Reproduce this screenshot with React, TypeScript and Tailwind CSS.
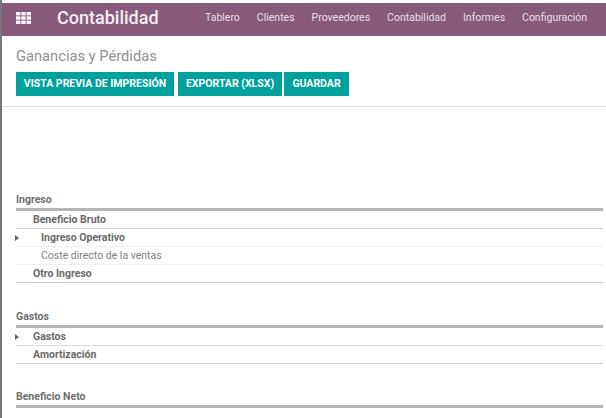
import React from "react";

const nav = ["Tablero", "Clientes", "Proveedores", "Contabilidad", "Informes", "Configuración"];

function Caret() {
  return (
    <svg width="4" height="6" viewBox="0 0 4 6" className="shrink-0">
      <path d="M0 0 L4 3 L0 6 Z" fill="#666" />
    </svg>
  );
}

function Section({ title, className }: { title: string; className: string }) {
  return (
    <div className={`flex items-end h-[21px] pb-[3px] mr-[3px] border-b-[3px] border-[#b5b5b5] text-[10.5px] font-bold leading-none text-[#707070] ${className}`}>
      <span>{title}</span>
    </div>
  );
}

function Row({ label, indent, bold = true, caret, line = "border-[#ddd]" }: { label: string; indent: string; bold?: boolean; caret?: boolean; line?: string }) {
  return (
    <div className={`relative flex items-center h-[18px] pt-[1px] mr-[3px] border-b ${line} text-[10.5px] leading-none ${bold ? "font-bold text-[#6a6a6a]" : "font-normal text-[#808080]"}`}>
      {caret && (
        <span className="absolute -left-[1px] top-[6px]">
          <Caret />
        </span>
      )}
      <span className={indent}>{label}</span>
    </div>
  );
}

export default function App() {
  return (
    <div className="w-[606px] h-[418px] overflow-hidden bg-white pt-[3px] border-l-2 border-[#777]" style={{ fontFamily: "Roboto, 'Liberation Sans', sans-serif" }}>
      <header className="h-[33px] pb-[4px] bg-[#875a7b] flex items-center text-white">
        <svg width="15" height="12" viewBox="0 0 15 12" className="ml-[14px] shrink-0" fill="#fbf4f8">
          <rect x="0" y="0" width="4.4" height="3.4" />
          <rect x="5.3" y="0" width="4.4" height="3.4" />
          <rect x="10.6" y="0" width="4.4" height="3.4" />
          <rect x="0" y="4.3" width="4.4" height="3.4" />
          <rect x="5.3" y="4.3" width="4.4" height="3.4" />
          <rect x="10.6" y="4.3" width="4.4" height="3.4" />
          <rect x="0" y="8.6" width="4.4" height="3.4" />
          <rect x="5.3" y="8.6" width="4.4" height="3.4" />
          <rect x="10.6" y="8.6" width="4.4" height="3.4" />
        </svg>
        <span className="ml-[26px] text-[18px] font-medium text-[#f6eef3] w-[148px] shrink-0">Contabilidad</span>
        <nav className="flex gap-[17px] text-[10.5px] text-[#eadfe7]">
          {nav.map((n) => (
            <span key={n}>{n}</span>
          ))}
        </nav>
      </header>

      <div className="h-[71px] pl-[14px] pt-[9px] border-b border-[#ddd]">
        <h1 className="text-[14.7px] leading-[22px] text-[#8f8f8f]">Ganancias y Pérdidas</h1>
        <div className="flex mt-[5px]">
          <span className="h-[24px] w-[158px] mr-[4px] flex items-center justify-center bg-[#00a09d] text-white text-[10.5px] font-bold">VISTA PREVIA DE IMPRESIÓN</span>
          <span className="h-[24px] w-[104px] mr-[2px] flex items-center justify-center bg-[#00a09d] text-white text-[10.5px] font-bold">EXPORTAR (XLSX)</span>
          <span className="h-[24px] w-[65px] flex items-center justify-center bg-[#00a09d] text-white text-[10.5px] font-bold">GUARDAR</span>
        </div>
      </div>

      <div className="pl-[14px]">
        <Section title="Ingreso" className="mt-[83px]" />
        <Row label="Beneficio Bruto" indent="pl-[17px]" line="border-[#ccc]" />
        <Row label="Ingreso Operativo" indent="pl-[25px]" caret line="border-[#eee]" />
        <Row label="Coste directo de la ventas" indent="pl-[25px]" bold={false} line="border-[#eee]" />
        <Row label="Otro Ingreso" indent="pl-[17px]" line="border-[#ccc]" />
        <Section title="Gastos" className="mt-[24px]" />
        <Row label="Gastos" indent="pl-[17px]" caret />
        <Row label="Amortización" indent="pl-[17px]" line="border-[#ccc]" />
        <Section title="Beneficio Neto" className="mt-[23px]" />
      </div>
    </div>
  );
}
